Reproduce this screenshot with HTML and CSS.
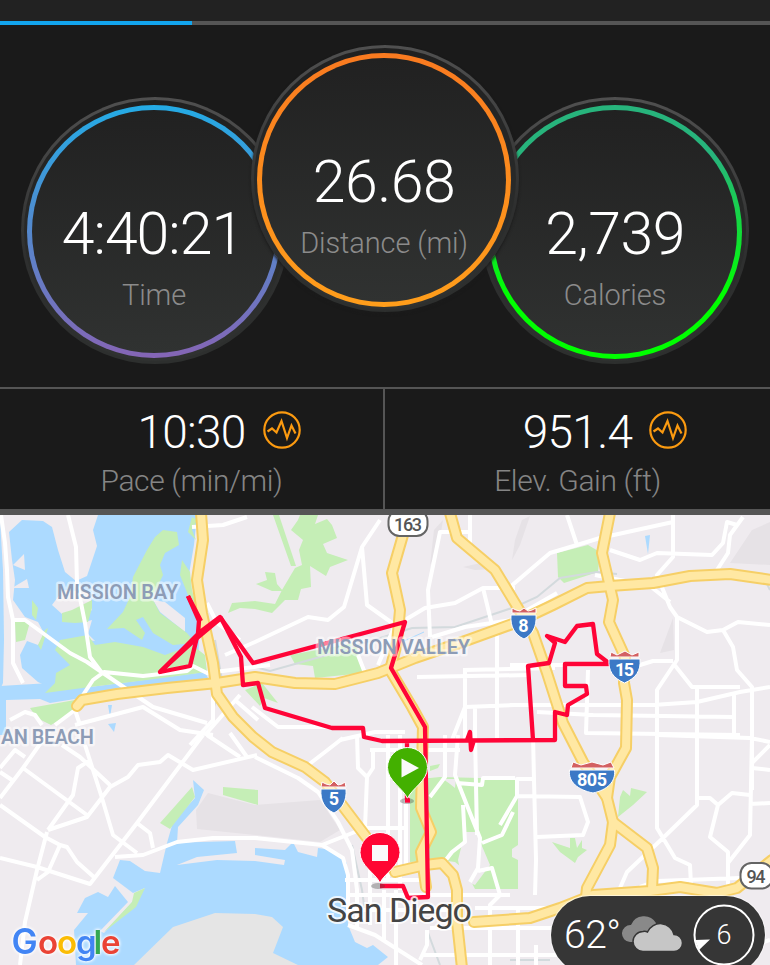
FILE: index.html
```html
<!DOCTYPE html>
<html lang="en">
<head>
<meta charset="utf-8">
<title>Activity summary</title>
<link rel="stylesheet" href="styles.css">
</head>
<body>
<main class="screen">
  <header class="pager"><div class="pager-track"><div class="pager-active"></div></div></header>

  <section class="dials">
    <div class="dial time"><div class="ring"><span class="value">4:40:21</span><span class="label">Time</span></div></div>
    <div class="dial distance"><div class="ring"><span class="value">26.68</span><span class="label">Distance (mi)</span></div></div>
    <div class="dial calories"><div class="ring"><span class="value">2,739</span><span class="label">Calories</span></div></div>
  </section>

  <section class="stats">
    <div class="stat">
      <div class="stat-row">
        <span class="stat-value">10:30</span>
        <svg class="wave" viewBox="0 0 38 38"><circle cx="19" cy="19" r="17.7"/><path d="M4.5 20.5 9 17.500l4.500 4L18.500 10l5.500 17 4.500-12.500 4 8"/></svg>
      </div>
      <div class="stat-label">Pace (min/mi)</div>
    </div>
    <div class="stat">
      <div class="stat-row">
        <span class="stat-value">951.4</span>
        <svg class="wave" viewBox="0 0 38 38"><circle cx="19" cy="19" r="17.7"/><path d="M4.5 20.5 9 17.500l4.500 4L18.500 10l5.500 17 4.500-12.500 4 8"/></svg>
      </div>
      <div class="stat-label">Elev. Gain (ft)</div>
    </div>
  </section>

  <section class="map">
    <svg class="map-canvas" viewBox="0 515 770 450">
      <!-- relief -->
      <g class="relief">
        <path d="M208 793 255 805 320 800 340 830 320 842 255 835 197 829 196 810Z"/>
        <path d="M512 560 515 540 522 520 530 516 520 545ZM730 563 752 530 770 522 770 565ZM430 565 434 530 443 520 438 550ZM660 653 673 618 674 650ZM463 567 485 562 495 569 475 570Z"/>
      </g>

      <!-- water -->
      <g class="water">
        <path d="M0 520 3 570 4 640 3 683 0 690Z"/>
        <path d="M9 532 22 520 43 521 52 527 58 550 65 572 76 581 87 576 97 546 93 530 98 515 197 515 194 545 188 580 200 620 198 665 160 680 110 678 90 660 55 690 38 682 22 668 20 655 27 641 38 645 45 635 38 622 25 617 13 600 15 580 12 560Z"/>
        <path d="M0 686 50 683 90 687 205 672 208 678 110 695 75 699 50 703 40 699 6 700 6 735 0 735Z"/>
        <path d="M108 705 112 705 110 717ZM108 724 116 723 114 732Z"/>
        <path d="M167 843 235 841 237 853 197 857 177 865 217 860 255 861 255 848 285 850 293 842 298 852 317 857 318 848 333 850 347 863 348 925 355 942 367 948 373 945 388 957 378 965 76 965 74 930 88 913 77 913 85 898 98 892 108 897 115 886 128 902 100 931 104 933 145 888 133 893 113 878 120 860 130 861 145 871 160 873Z"/>
        <path d="M193 780 204 790 198 805 178 827 177 843 167 843 173 822 195 798Z"/>
        <path d="M645 536 650 535 648 554Z"/>
      </g>
      <g class="land">
        <path d="M13 565 24 554 25 570ZM12 588 27 579 29 588ZM52 605 63 590 90 592 92 610 80 618 62 614ZM153 600 165 602 185 618 185 632 160 612ZM255 855 285 860 284 865 255 861Z"/>
        <path d="M95 641 88 634 92 620 85 622 88 640Z"/>
      </g>
      <path class="island" d="M133 966 173 927 215 913 255 914 272 917 283 927 273 953 300 966Z"/>

      <!-- parks -->
      <g class="park">
        <path d="M62 613 72 610 92 600 92 608 88 622 75 623 62 622ZM15 622 30 622 25 640 16 642ZM32 600 38 608 36 620 32 615ZM38 645 45 630 48 628 41 650Z"/>
        <path d="M163 530 177 532 179 545 165 553 160 565 163 575 152 598 160 613 187 633 195 643 173 645 153 633 143 617 136 620 145 633 142 640 124 628 107 629 123 612 130 597 133 577 147 550 155 537Z"/>
        <path d="M182 560 190 572 192 590 197 610 190 600 180 575ZM192 517 197 520 192 530 196 540 188 532Z"/>
        <path d="M55 650 60 640 88 635 95 645 115 642 143 647 165 655 192 645 205 655 207 672 147 680 90 687 45 693 55 683 56 673 70 665Z"/>
        <path d="M30 708 75 700 73 712 51 725 37 718Z"/>
        <path d="M298 520 300 515 318 515 315 524 327 519 332 525 337 538 323 544 327 553 348 560 330 567 326 576 310 566 311 587 301 589 298 600 285 600 272 613 255 609 240 608 228 613 232 603 255 601 275 604 282 590 295 568 302 565 299 550 303 540 291 530Z"/>
        <path d="M273 515 279 515 296 566 291 566ZM256 584 267 580 265 572 275 573 277 584 283 591 272 591Z"/>
        <path d="M290 655 355 643 364 673 315 678 313 666 295 664ZM245 690 262 683 278 703 264 698 260 706Z"/>
        <path d="M557 553 588 545 600 552 598 572 564 583 558 577Z"/>
        <path d="M618 817 620 797 623 790 630 796 631 788 647 792 633 805ZM552 842 570 848 570 838 575 838 577 848 582 840 582 848 587 850 578 857 575 863 560 852Z"/>
        <path d="M410 778 430 778 440 777 518 779 518 845 512 849 512 857 518 860 518 889 475 889 465 870 455 862 440 860 410 862ZM430 766 440 764 438 768 430 771Z"/>
        <path d="M192 787 195 797 170 829 160 823ZM223 787 258 790 258 805 223 795ZM134 893 145 888 136 907 104 932 132 902Z"/>
      </g>
      <path class="land" d="M465 832 476 832 490 865 475 885 462 880 458 860ZM443 779 456 779 455 788 450 784Z"/>

      <!-- rail -->
      <g class="rail">
        <path d="M255 667 270 671 320 657 412 628 455 627 515 607 537 597 560 578 597 572 617 574M352 845 362 890 366 920M215 640 222 680 213 710M770 590 765 580M427 930 440 965M510 960H550"/>
      </g>
      <path class="stream" d="M404 641 424 632"/>

      <!-- streets -->
      <g class="street">
        <path d="M1 515 5 543 7 570 8 597 13 620 13 663 23 683M13 620H25L70 653 87 662 103 673 125 688 153 707 207 723M68 515 76 547 77 583 85 623 90 657 102 673M75 707 93 680 104 672 143 676 187 671 193 666 207 673 270 665M75 725 143 707 180 730 213 735M192 527 223 525 247 517M207 603 217 623 240 640M10 720 25 712 35 715 42 725M55 725 75 710 80 725M213 690 213 720 190 745M240 695 205 735M235 700 258 720"/>
        <path d="M225 655 255 642 308 617 328 620 344 607 362 547 380 520M362 547 367 605 395 625 378 665M405 620 425 608 455 603 483 588H515M470 532H440L428 590 430 637M470 515V555M417 677 530 675M463 670 555 668M465 670V740M475 707V740M497 627V740M452 740 465 707 515 705M483 588 492 625M432 637 465 627 512 620M252 707 278 727 330 727M340 740 375 732 405 732M358 655 365 673"/>
        <path d="M510 587 550 553 577 545 600 538 673 522M567 515 577 545M673 515V557L657 575 670 607 677 617V660L657 690V828L675 858 690 865 691 885M610 550 640 560 657 553 712 555 723 543 727 522 737 525M743 517 730 535 728 553 717 570M650 586 670 602M677 617 707 632 723 630 738 622 770 625M723 630 733 647 737 670 752 687 752 790M673 663 692 687 740 687M510 705H653L697 702 740 692 770 687M537 712 593 715 733 717M588 670 586 733 740 735M697 687V805L663 838 627 872 620 888M734 692V735M510 665H640L653 661H673M510 620 557 593M595 575 645 585"/>
        <path d="M697 798H710L718 805 710 837 728 852V885M718 805 732 793 750 795M752 735 750 835 728 863M752 768 770 770M770 745 752 763M657 735 750 738 770 742M750 804 770 803M640 887 657 881 740 878M533 735 534 780 536 860 535 895M517 796V779H535M500 825 517 796 580 797 588 822 583 835 537 837M475 908H550M430 928H560M518 908V965M536 945V965M422 955H570M755 945 770 940"/>
        <path d="M430 797 445 777V735M458 735 455 775 468 808 480 838 478 868 470 882M457 783 482 785 483 778H515M475 735 477 835M513 812 502 835 482 843M463 805 465 842 452 852 442 865M478 871 492 868 500 895 490 905V965M357 735 358 768 367 777 365 828 322 845M388 735V880M355 828H405M370 750H460M373 750V768L367 777M308 765 325 752 343 738M400 735V890M406 800V870M430 895H510"/>
        <path d="M255 757 298 778 318 792 338 822 352 850 357 890V930M255 838 322 845 343 858 348 875V920M348 925 375 935 422 965M370 865V925M384 890V940M396 890V965M345 880H430M347 895H430M348 910H450M427 930V945L420 960"/>
        <path d="M0 805 45 837 60 845 67 847 77 862 95 878M0 858 37 867 90 884 137 823 203 735M0 798 23 768 50 730M23 768 87 815M0 768 15 750 25 757M0 772 12 780M48 830 73 795 78 768 90 760M48 830 87 817 110 787 128 777 138 765 160 762 168 755 193 770 257 755M62 745 80 757 110 785M85 745 102 798 113 835 137 853M115 857 143 855 177 842 213 838H258M137 823 150 833 153 848M47 832 37 870 25 922 20 965M60 845 48 872 37 880M207 735 240 757M230 733 247 757"/>
      </g>

      <!-- motorways: casing, then fill -->
      <defs>
        <g id="motorways">
          <path d="M201 513 203 540 197 580 202 613 213 663 217 694 233 717 253 737 272 752 305 767 325 782 342 805 367 838M395 872 425 865 442 863 453 875 457 890V922L462 968"/>
          <path d="M77 706 82 700 117 694 167 688 217 683 255 677 295 683 335 684 378 673 415 658 468 640 515 623 553 605 587 588 610 586 653 583 690 576 730 574 772 580"/>
          <path d="M405 513 403 535 392 573 400 610 397 643 390 670 412 707 423 727 421 808 431 832 421 852 426 887"/>
          <path d="M450 513 457 538 495 570 515 603 533 633 547 673 563 723 583 762 607 798 613 822 610 845 587 888 586 897"/>
          <path d="M610 513 602 553 613 600 609 622 625 657 624 683 627 700 626 748 610 777 607 798M613 822 647 848 653 868 652 890"/>
          <path d="M474 922 530 918 560 908 593 895 650 891 680 887 717 893 737 888 772 860"/>
        </g>
      </defs>
      <use href="#motorways" class="casing"/>
      <use href="#motorways" class="motorway"/>

      <!-- recorded track -->
      <path class="track" d="M188 596 199 621 198 633 190 666 160 672 200 632 220 617 253 663 405 622 391 668 425 727 428 897 408 898 403 886H380"/>
      <path class="track" d="M160 672 197 638 221 618 241 657 243 685 258 683 265 708 332 728H363L364 737 382 741 555 740V712L567 715 568 705 587 694 586 686H565V664H610L597 654 593 624 577 626 565 642 547 636 555 643 549 663 528 666 533 740M188 596 201 621M407 740V800M467 740 470 732 471 750 474 740"/>

      <!-- road shields -->
      <g class="pill-shield"><rect x="388.500" y="510" width="39" height="26" rx="11"/><text x="408" y="530.500" textLength="28">163</text></g>
      <g class="pill-shield"><rect x="740.500" y="863" width="32" height="25.500" rx="11"/><text x="756" y="882.500" textLength="19">94</text></g>
      <g class="shield">
        <path class="shield-red" d="M512 608 516 610 520 611 524 608 528 611 532 610 536 608 536 613H512Z"/>
        <path class="shield-blue" d="M511 615H536C537 627 532 635 524 639 515 635 510 627 511 615Z"/>
        <text x="523.500" y="632">8</text>
      </g>
      <g class="shield">
        <path class="shield-red" d="M611 652 617 655 625 651 632 655 639 652V657H610Z"/>
        <path class="shield-blue" d="M609 659H640C641 671 636 678 624.500 683 613 678 608 671 609 659Z"/>
        <text x="624.500" y="675.500" textLength="19">15</text>
      </g>
      <g class="shield">
        <path class="shield-red" d="M322 782 326 784 330 785 334 781 338 785 342 784 345 782 346 787H321Z"/>
        <path class="shield-blue" d="M321 789H346C347 801 342 809 334 813 325 809 320 801 321 789Z"/>
        <text x="334" y="805">5</text>
      </g>
      <g class="shield">
        <path class="shield-red" d="M573 762 581 765 592 762 603 765 611 762 614 768H571Z"/>
        <path class="shield-blue" d="M569.500 770H614.500C616 782 607 790 593 793 578 790 568 782 569.500 770Z"/>
        <text x="592" y="786" textLength="30">805</text>
      </g>

      <!-- place names -->
      <g class="area">
        <text x="57" y="599" textLength="121">MISSION BAY</text>
        <text x="317" y="654" textLength="153">MISSION VALLEY</text>
        <text x="1" y="743.500" textLength="93">AN BEACH</text>
      </g>
      <text class="city" x="327" y="921.500" textLength="145">San Diego</text>

      <!-- start and finish pins -->
      <ellipse class="pin-shadow" cx="407" cy="801" rx="7" ry="3"/>
      <path class="pin start" d="M407.500 798.500C403 788 387.500 781 387.500 767.500A20 20 0 0 1 427.500 767.500C427.500 781 412 788 407.500 798.500Z"/>
      <path class="pin-glyph" d="M401.500 758.500 419 768 401.500 777.500Z"/>
      <path class="track" d="M405 800.500H410"/>
      <ellipse class="pin-shadow" cx="378" cy="886" rx="7" ry="3"/>
      <path class="pin finish" d="M380 883C375.500 873 360 866 360 852.500A20 20 0 0 1 400 852.500C400 866 384.500 873 380 883Z"/>
      <rect class="pin-glyph" x="372" y="845" width="16" height="16"/>

      <g class="google"><text y="953.500"><tspan x="11.500" class="g-blue cap">G</tspan><tspan x="38" class="g-red">o</tspan><tspan x="57" class="g-yellow">o</tspan><tspan x="76" class="g-blue">g</tspan><tspan x="93.500" class="g-green">l</tspan><tspan x="101" class="g-red">e</tspan></text></g>
    </svg>

    <aside class="weather">
      <span class="temp">62°</span>
      <svg class="clouds" viewBox="0 0 62 36">
        <path class="cloud-back" d="M9 26A8.500 8.500 0 0 1 10 9 14 14 0 0 1 35 7L35 26Z"/>
        <path class="cloud-front" d="M22 35.500A9.800 9.800 0 0 1 22 15.500Q24.500 15 26.500 16A14 14 0 0 1 53 18.500 8.500 8.500 0 0 1 53 35.500Z"/>
      </svg>
      <div class="wind">
        <svg class="wind-ring" viewBox="0 0 62 62"><circle cx="31" cy="31" r="29.500"/><path d="M2 36 17 35.500 6 46Z"/></svg>
        <span class="wind-speed">6</span>
      </div>
    </aside>
  </section>
</main>
</body>
</html>
```
FILE: styles.css
```css
* { box-sizing: border-box; }
body { margin: 0; background: #1a1a1a; font-family: Roboto, sans-serif; }
.screen { width: 770px; height: 965px; overflow: hidden; display: flex; flex-direction: column; }

.pager { height: 25px; background: #222; padding-top: 21px; flex: none; }
.pager-track { height: 4px; background: #555; }
.pager-active { width: 192px; height: 4px; background: #12a5ee; }

.dials { height: 362px; padding-top: 20px; display: flex; justify-content: center; align-items: flex-start; flex: none; }
.dial {
  width: 268px; height: 267px; padding: 6px; border-radius: 50%; flex: none; margin-top: 52px;
  border: 3px solid transparent;
  background: linear-gradient(#202020, #303231) padding-box, linear-gradient(#505050, #2e2f2f 60%, #2d2f2e) border-box;
}
.distance { margin: 0 -38px; position: relative; z-index: 1; box-shadow: 0 2px 3px #1b1b1b; }
.ring {
  height: 254px; margin: -1px -2px 0; border-radius: 50%; border: 5px solid transparent;
  display: flex; flex-direction: column; align-items: center; padding-top: 89px;
}
.time .ring { height: 253px; margin-left: -3px; margin-right: -1px; background: linear-gradient(#212121, #303231) padding-box, linear-gradient(#24abe5, #8565b5) border-box; }
.distance .ring { margin-left: -3px; margin-right: -1px; background: linear-gradient(#212121, #303231) padding-box, linear-gradient(#f97a20, #ff9e1b) border-box; }
.calories .ring { background: linear-gradient(#212121, #303231) padding-box, linear-gradient(#27b47c 20%, #00ff00 75%) border-box; }
.value { font-size: 59px; line-height: 70px; font-weight: 300; color: #fff; letter-spacing: -.5px; }
.time .value { margin-left: -3px; letter-spacing: -1px; }
.label { font-size: 29px; line-height: 34px; font-weight: 300; color: #8b8b8b; margin-top: 9px; letter-spacing: -.1px; }

.stats { height: 128px; display: grid; grid-template-columns: 385px 385px; border-top: 2px solid #555; border-bottom: 6px solid #555; flex: none; }
.stat { padding-top: 15px; text-align: center; }
.stat:first-child { border-right: 2px solid #555; }
.stat-row { display: grid; grid-template-columns: 1fr auto 1fr; align-items: center; }
.stat-value { grid-column: 2; font-size: 46px; line-height: 56px; font-weight: 300; color: #fff; letter-spacing: -.7px; }
.wave { width: 38px; height: 38px; margin: -5px 0 0 17px; fill: none; stroke: #fb9a10; stroke-width: 2.200; }
.stat-label { font-size: 30px; line-height: 36px; margin-top: 3px; font-weight: 300; color: #858585; letter-spacing: -.4px; }

.map { position: relative; height: 450px; background: #efebef; flex: none; }
.map-canvas { display: block; width: 770px; height: 450px; }
.water path { fill: #acdaff; }
.land, .land path { fill: #efebef; }
.relief path { fill: #e6e2e6; }
.island { fill: #e5e5e5; }
.park path { fill: #c5eeb6; }
.rail path { fill: none; stroke: #d3dadd; stroke-width: 2; }
.stream { stroke: #acdaff; stroke-width: 1; }
.street path { fill: none; stroke: #fff; stroke-width: 4; stroke-linejoin: round; }
.casing, .motorway { fill: none; stroke-linejoin: round; stroke-linecap: round; }
.casing { stroke: #f6cf66; stroke-width: 12px; }
.motorway { stroke: #ffe8a3; stroke-width: 8px; }
.track { fill: none; stroke: #ff0437; stroke-width: 4.3; stroke-linejoin: round; }
.pill-shield rect { fill: #fff; stroke: #646464; stroke-width: 2; }
.pill-shield text { font-size: 18px; font-weight: 500; text-anchor: middle; fill: #555; }
.shield path { stroke: #fff; stroke-width: 1; }
.shield-red { fill: #d36062; }
.shield-blue { fill: #3c79c6; }
.shield text { fill: #fff; font-size: 18px; font-weight: 700; text-anchor: middle; }
.area text { font-size: 20px; font-weight: 600; fill: #8d9cb6; stroke: rgba(255,255,255,.5); stroke-width: 5; paint-order: stroke; stroke-linejoin: round; }
.city { font-size: 34px; fill: #444; stroke: rgba(255,255,255,.8); stroke-width: 4; paint-order: stroke; }
.pin { stroke: #fff; stroke-width: 1; }
.start { fill: #43b000; }
.finish { fill: #ff0633; }
.pin-glyph { fill: #fafafa; }
.pin-shadow { fill: rgba(70,70,70,.35); }
.google { font-family: Inter, Roboto, sans-serif; font-size: 33px; font-weight: 600; filter: drop-shadow(0 0 1.500px #fff) drop-shadow(0 0 1.500px #fff); }
.google .cap { font-size: 35px; }
.g-blue { fill: #4285f4; }
.g-red { fill: #ea4335; }
.g-yellow { fill: #fbbc05; }
.g-green { fill: #34a853; }

.weather {
  position: absolute; left: 551px; top: 381px; width: 214px; height: 78px; border-radius: 39px;
  background: #363636; box-shadow: 0 0 0 1px #fff8; color: #fff; display: flex; padding-left: 13px;
}
.temp { width: 57px; font-size: 39px; line-height: 79px; font-weight: 300; white-space: nowrap; letter-spacing: -.5px; }
.clouds { width: 62px; height: 36px; margin-top: 20px; flex: none; }
.cloud-back { fill: #898989; }
.cloud-front { fill: #c6c6c6; stroke: #363636; stroke-width: 1.500; }
.wind { display: grid; width: 62px; height: 62px; margin: 8px 0 0 10px; place-items: center; flex: none; }
.wind-ring, .wind-speed { grid-area: 1 / 1; }
.wind-ring { width: 62px; height: 62px; fill: #fff; }
.wind-ring circle { fill: none; stroke: #fff; stroke-width: 2; }
.wind-speed { font-size: 27px; font-weight: 300; line-height: 32px; }
```
